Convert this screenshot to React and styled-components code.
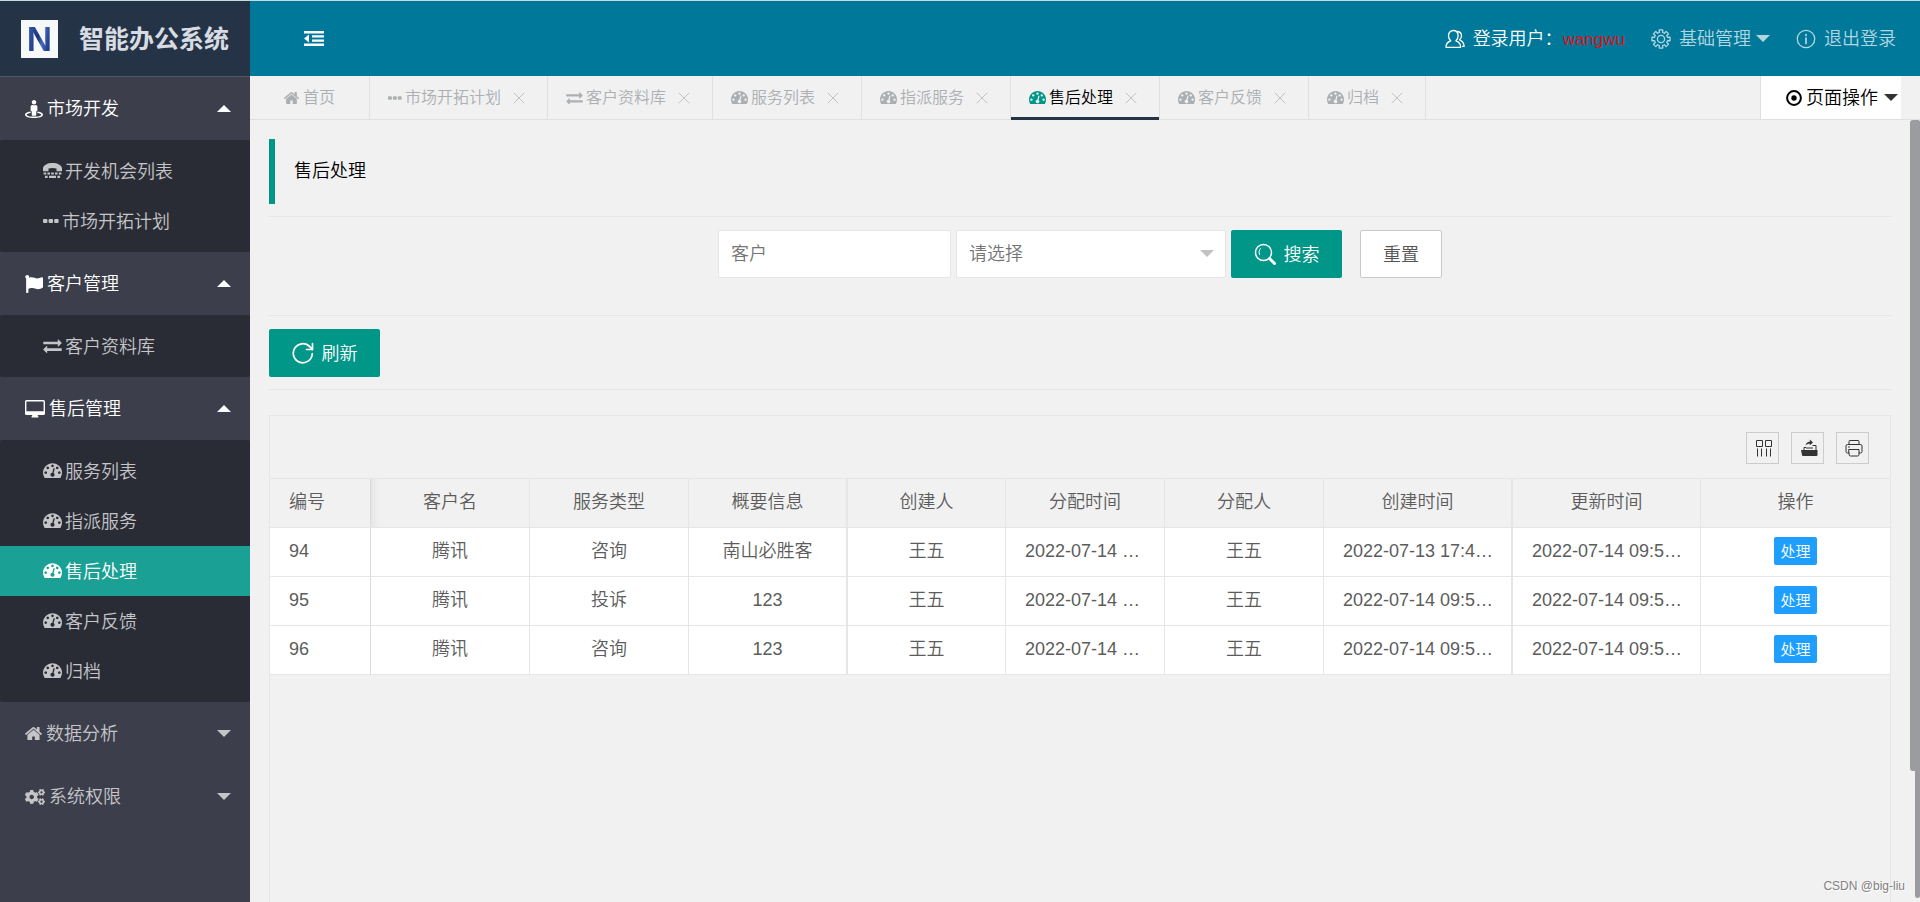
import React, {useState} from 'react';
import styled, {createGlobalStyle, css} from 'styled-components';
import {FaCogs, FaFlag, FaStreetView} from 'react-icons/fa';

const GlobalStyle = createGlobalStyle`
  * {
    box-sizing: border-box;
  }
  body {
    margin: 0;
    background-color: #f1f1f1;
    font-family: "Liberation Sans", "Noto Sans CJK SC", sans-serif;
    font-size: 18px;
    font-weight: 350;
    color: #5c5c5c;
  }
  button, input, select {
    font-family: inherit;
    font-size: inherit;
    font-weight: inherit;
  }
  a {
    color: inherit;
    text-decoration: none;
  }
  ul {
    list-style: none;
    margin: 0;
    padding: 0;
  }
`;

// ---------- icons ----------

const Svg = styled.svg`
  display: block;
  flex: none;
  fill: currentColor;
`;

const LineSvg = styled(Svg)`
  fill: none;
  stroke: currentColor;
  stroke-linecap: round;
  stroke-linejoin: round;
`;

const HomeIcon = ({size}) => (
    <Svg viewBox="90 250 1612 1290" width={size} height={size * 0.8}>
        <path d="M1472 992v480q0 26-19 45t-45 19h-384v-384h-256v384h-384q-26 0-45-19t-19-45v-480q0-1 .5-3t.5-3l575-474 575 474q1 2 1 6zm223-69l-62 74q-8 9-21 11h-3q-13 0-21-7l-692-577-692 577q-12 8-24 7-13-2-21-11l-62-74q-8-10-7-23.5t11-21.5l719-599q32-26 76-26t76 26l244 204v-195q0-14 9-23t23-9h192q14 0 23 9t9 23v408l219 182q10 8 11 21.5t-7 23.5z"/>
    </Svg>
);

const DashboardIcon = ({size}) => (
    <Svg viewBox="0 256 1792 1408" width={size} height={size * 0.8}>
        <path d="M384 1152q0-53-37.5-90.5t-90.5-37.5-90.5 37.5-37.5 90.5 37.5 90.5 90.5 37.5 90.5-37.5 37.5-90.5zm192-448q0-53-37.5-90.5t-90.5-37.5-90.5 37.5-37.5 90.5 37.5 90.5 90.5 37.5 90.5-37.5 37.5-90.5zm428 481l101-382q6-26-7.5-48.5t-38.5-29.5-48 6.5-30 39.5l-101 382q-60 5-107 43.5t-63 98.5q-20 77 20 146t117 89 146-20 89-117q16-60-6-117t-72-91zm660-33q0-53-37.5-90.5t-90.5-37.5-90.5 37.5-37.5 90.5 37.5 90.5 90.5 37.5 90.5-37.5 37.5-90.5zm-640-640q0-53-37.5-90.5t-90.5-37.5-90.5 37.5-37.5 90.5 37.5 90.5 90.5 37.5 90.5-37.5 37.5-90.5zm448 192q0-53-37.5-90.5t-90.5-37.5-90.5 37.5-37.5 90.5 37.5 90.5 90.5 37.5 90.5-37.5 37.5-90.5zm320 448q0 261-141 483-19 29-54 29h-1402q-35 0-54-29-141-221-141-483 0-182 71-348t191-286 286-191 348-71 348 71 286 191 191 286 71 348z"/>
    </Svg>
);

const ExchangeIcon = ({size}) => (
    <Svg viewBox="0 160 1792 1472" width={size} height={size * 0.8}>
        <path d="M1792 1184v192q0 13-9.5 22.5t-22.5 9.5h-1376v192q0 13-9.5 22.5t-22.5 9.5q-12 0-24-10l-319-320q-9-9-9-22 0-14 9-23l320-320q9-9 23-9 13 0 22.5 9.5t9.5 22.5v192h1376q13 0 22.5 9.5t9.5 22.5zm0-544q0 14-9 23l-320 320q-9 9-23 9-13 0-22.5-9.5t-9.5-22.5v-192h-1376q-13 0-22.5-9.5t-9.5-22.5v-192q0-13 9.5-22.5t22.5-9.5h1376v-192q0-14 9-23t23-9q12 0 24 10l319 319q9 9 9 23z"/>
    </Svg>
);

const TtyIcon = ({size}) => (
    <Svg viewBox="0 0 19 15" width={size} height={size * 0.8}>
        <path d="M0 7.600V5.200C.5 2 4.500 0 9.500 0S18.500 2 19 5.200v2.400a.6.6 0 0 1-.6.6h-4.300a.6.6 0 0 1-.6-.6V5.400c-2.500-.8-5.500-.8-8 0v2.200a.6.6 0 0 1-.6.6H.6a.6.6 0 0 1-.6-.6z"/>
        <path d="M.6 9.300h2.600v2.200H.6zM4.400 9.300H7v2.200H4.400zM8.200 9.300h2.600v2.200H8.200zM12 9.300h2.600v2.200H12zM15.800 9.300h2.600v2.200h-2.600zM2 12.700h2.600v2.200H2zM6 12.700h7v2.200H6zM14.400 12.700H17v2.200h-2.600z"/>
    </Svg>
);

const EllipsisIcon = ({size}) => (
    <Svg viewBox="0 0 16 16" width={size} height={size}>
        <rect x="0" y="6" width="4.4" height="4" rx="1"/>
        <rect x="5.6" y="6" width="4.4" height="4" rx="1"/>
        <rect x="11.2" y="6" width="4.4" height="4" rx="1"/>
    </Svg>
);

const DesktopIcon = ({size}) => (
    <Svg viewBox="0 0 20 18" width={size} height={size * 0.9}>
        <path fillRule="evenodd" d="M1.6 0h16.8a1.6 1.6 0 0 1 1.6 1.6v11.8a1.6 1.6 0 0 1-1.6 1.6H12.600c.1 1 .9 1.200.9 1.900a.6.6 0 0 1-.6.6H7.100a.6.6 0 0 1-.6-.6c0-.7.8-.9.9-1.900H1.600A1.600 1.600 0 0 1 0 13.400V1.600A1.600 1.600 0 0 1 1.600 0zM1.700 1.400a.3.3 0 0 0-.3.3v9.300c0 .2.100.3.3.3h16.600c.2 0 .3-.1.3-.3V1.700c0-.2-.1-.3-.3-.3z"/>
    </Svg>
);

const OutdentIcon = () => (
    <Svg viewBox="0 0 20 15" width="20" height="15">
        <path d="M0 0h20v2.500H0zM8 4.200h12v2.400H8zM8 8.400h12v2.400H8zM0 12.500h20V15H0zM0 7.500l5-4v8z"/>
    </Svg>
);

const UserIcon = () => (
    <LineSvg viewBox="0 0 20 20" width="20" height="20" strokeWidth="1.300">
        <path d="M1 18.300c0-3.600 1.900-5.600 4.700-6.500C4.300 10.600 3.500 8.800 3.500 6.700 3.500 3.600 5.500 1.500 8.300 1.500s4.800 2.100 4.800 5.200c0 2.100-.8 3.900-2.200 5.100 2.800.9 4.700 2.900 4.700 6.500z"/>
        <path d="M12.600 2.500c2.400.3 3.900 1.900 3.900 4.200 0 1.700-.7 3.200-1.900 4.100 2.600 1.100 4.400 3.300 4.500 6.600h-1.500"/>
    </LineSvg>
);

const gearPath = () => {
    const points = [];
    for (let i = 0; i < 8; i++) {
        const a = (i * Math.PI) / 4 - Math.PI / 2;
        [[-0.25, 6.7], [-0.19, 9.2], [0.19, 9.2], [0.25, 6.7]].forEach(([d, r]) => {
            points.push(`${(10 + r * Math.cos(a + d)).toFixed(2)} ${(10 + r * Math.sin(a + d)).toFixed(2)}`);
        });
    }
    return `M${points.join('L')}z`;
};

const GearIcon = () => (
    <LineSvg viewBox="0 0 20 20" width="20" height="20" strokeWidth="1.300">
        <path d={gearPath()}/>
        <circle cx="10" cy="10" r="3.600"/>
    </LineSvg>
);

const InfoIcon = () => (
    <LineSvg viewBox="0 0 20 20" width="20" height="20" strokeWidth="1.300">
        <circle cx="10" cy="10" r="8.700"/>
        <path d="M10 9v5.500M10 5.500v1" strokeWidth="1.700"/>
    </LineSvg>
);

const DotCircleIcon = () => (
    <Svg viewBox="0 0 16 16" width="16" height="16">
        <circle cx="8" cy="8" r="6.900" fill="none" stroke="currentColor" strokeWidth="2"/>
        <circle cx="8" cy="8" r="2.700"/>
    </Svg>
);

const CloseIcon = () => (
    <LineSvg viewBox="0 0 12 12" width="12" height="12">
        <path d="M1 1l10 10M11 1L1 11"/>
    </LineSvg>
);

const SearchIcon = () => (
    <LineSvg viewBox="0 0 22 22" width="22" height="22" strokeWidth="1.500">
        <circle cx="9.500" cy="9.500" r="8"/>
        <path d="M5.500 11.500c-.9-2-.5-4.500 1-6" strokeWidth="1"/>
        <path d="M15.500 15.500l5 5" strokeWidth="3"/>
    </LineSvg>
);

const RefreshIcon = () => (
    <LineSvg viewBox="0 0 22 22" width="22" height="22" strokeWidth="1.700">
        <path d="M20.300 11.500A9.500 9.500 0 1 1 17.700 4.700l2.500 2.600"/>
        <path d="M20.500 1.500v6h-6"/>
    </LineSvg>
);

const ColumnsIcon = () => (
    <LineSvg viewBox="0 0 18 18" width="18" height="18">
        <path d="M1.500 1.500h6v6h-6zM10.500 1.500h6v6h-6zM2.500 9.500v8M6.500 9.500v8M11.500 9.500v8M15.500 9.500v8" strokeLinecap="butt"/>
    </LineSvg>
);

const ExportIcon = () => (
    <Svg viewBox="0 0 18 18" width="18" height="18">
        <path d="M1 11h16.500v5a1 1 0 0 1-1 1H3a1 1 0 0 1-1-1z"/>
        <path d="M4 11V8.500h2M12.500 6.500H16V11" fill="none" stroke="currentColor"/>
        <path d="M5.500 6.500C6 4 7.500 2.800 9.800 2.700V.5L13 3.500 9.800 6.200V4.700C8 4.700 6.600 5.200 5.500 6.500z"/>
        <path d="M6 9h7" stroke="currentColor"/>
    </Svg>
);

const PrintIcon = () => (
    <LineSvg viewBox="0 0 18 18" width="18" height="18">
        <path d="M4 5.500V2.500a1 1 0 0 1 1-1h8a1 1 0 0 1 1 1v3M4 14H2.500a1.500 1.500 0 0 1-1.500-1.500V7a1.500 1.500 0 0 1 1.500-1.500h13A1.500 1.500 0 0 1 17 7v5.500a1.500 1.500 0 0 1-1.500 1.500H14M3.500 8h1"/>
        <path d="M4 10.500h10v5a1.500 1.500 0 0 1-1.500 1.500h-7A1.500 1.500 0 0 1 4 15.500z"/>
    </LineSvg>
);

const Caret = styled.span`
  flex: none;
  width: 0;
  height: 0;
  border: 7px solid transparent;
  ${(props) => props.$up
    ? css`border-top-width: 0; border-bottom-color: currentColor;`
    : css`border-bottom-width: 0; border-top-color: currentColor;`}
`;

// text that stands beside an icon, lifted to the icon's optical middle
const Label = styled.span`
  padding-bottom: 3px;
`;

// ---------- data ----------

const menus = [
    {
        title: '市场开发', icon: <FaStreetView size={18}/>, open: true,
        items: [
            {title: '开发机会列表', icon: <TtyIcon size={19}/>},
            {title: '市场开拓计划', icon: <EllipsisIcon size={16}/>},
        ],
    },
    {
        title: '客户管理', icon: <FaFlag size={18}/>, open: true,
        items: [{title: '客户资料库', icon: <ExchangeIcon size={19}/>}],
    },
    {
        title: '售后管理', icon: <DesktopIcon size={20}/>, open: true,
        items: ['服务列表', '指派服务', '售后处理', '客户反馈', '归档'].map((title) => (
            {title, icon: <DashboardIcon size={19}/>}
        )),
    },
    {title: '数据分析', icon: <HomeIcon size={17}/>, open: false, items: []},
    {title: '系统权限', icon: <FaCogs size={20}/>, open: false, items: []},
];

const tabs = [
    {title: '市场开拓计划', icon: <EllipsisIcon size={14}/>},
    {title: '客户资料库', icon: <ExchangeIcon size={17}/>},
    {title: '服务列表', icon: <DashboardIcon size={17}/>},
    {title: '指派服务', icon: <DashboardIcon size={17}/>},
    {title: '售后处理', icon: <DashboardIcon size={17}/>},
    {title: '客户反馈', icon: <DashboardIcon size={17}/>},
    {title: '归档', icon: <DashboardIcon size={17}/>},
];

const columns = [
    {key: 'id', title: '编号', width: 101, align: 'left', fixed: true},
    {key: 'customer', title: '客户名', width: 159},
    {key: 'type', title: '服务类型', width: 159},
    {key: 'overview', title: '概要信息', width: 159, thick: true},
    {key: 'creator', title: '创建人', width: 158},
    {key: 'assignTime', title: '分配时间', width: 159, time: true},
    {key: 'assigner', title: '分配人', width: 159},
    {key: 'createTime', title: '创建时间', width: 189, time: true, thick: true},
    {key: 'updateTime', title: '更新时间', width: 188, time: true},
];

const rows = [
    {id: '94', customer: '腾讯', type: '咨询', overview: '南山必胜客', creator: '王五', assignTime: '2022-07-14 …', assigner: '王五', createTime: '2022-07-13 17:4…', updateTime: '2022-07-14 09:5…'},
    {id: '95', customer: '腾讯', type: '投诉', overview: '123', creator: '王五', assignTime: '2022-07-14 …', assigner: '王五', createTime: '2022-07-14 09:5…', updateTime: '2022-07-14 09:5…'},
    {id: '96', customer: '腾讯', type: '咨询', overview: '123', creator: '王五', assignTime: '2022-07-14 …', assigner: '王五', createTime: '2022-07-14 09:5…', updateTime: '2022-07-14 09:5…'},
];

// ---------- layout ----------

const Layout = styled.div`
  display: flex;
  height: 100vh;
  overflow: hidden;
  border-top: 1px solid #c5dbe0;
`;

const Side = styled.aside`
  flex: none;
  width: 250px;
  background-color: #3c3f4b;
  overflow: hidden;
`;

const Logo = styled.a`
  display: flex;
  align-items: center;
  gap: 21px;
  height: 76px;
  padding-left: 21px;
  background-color: #243346;
  border-bottom: 1px solid #4d5665;
`;

const LogoMark = styled.span`
  display: flex;
  align-items: center;
  justify-content: center;
  width: 37px;
  height: 38px;
  background: #f7f8fa;
`;

const LogoLetter = styled.span`
  font-size: 35px;
  line-height: 38px;
  font-weight: 700;
  color: transparent;
  background: linear-gradient(100deg, #2f4f9f 20%, #1b3379 45%, #4a6cbc 60%, #23418f 80%);
  background-clip: text;
`;

const LogoText = styled.h1`
  margin: 0;
  font-size: 25px;
  line-height: 36px;
  font-weight: 700;
  color: #d8dce2;
`;

const MenuHead = styled.button`
  display: flex;
  align-items: center;
  gap: 4px;
  width: 100%;
  height: 63px;
  padding: 0 19px 0 25px;
  border: 0;
  background: none;
  color: ${(props) => props.$open ? '#fff' : '#c5c5c9'};
  cursor: pointer;

  ${Caret} {
    margin-left: auto;
  }
`;

const SubMenu = styled.ul`
  padding: 6px 0;
  background-color: #2a2c35;
  border-radius: 2px;
`;

const SubLink = styled.a`
  display: flex;
  align-items: center;
  gap: 3px;
  height: 50px;
  padding-left: 43px;
  color: ${(props) => props.$active ? '#fff' : '#c4c5c8'};
  background-color: ${(props) => props.$active && '#1aa094'};
`;

const Main = styled.div`
  flex: 1;
  min-width: 0;
  display: flex;
  flex-direction: column;
`;

const Header = styled.header`
  flex: none;
  display: flex;
  align-items: center;
  justify-content: space-between;
  height: 75px;
  padding: 0 24px 0 54px;
  background-color: #00789a;
  color: #fff;
`;

const IconButton = styled.button`
  display: flex;
  padding: 0;
  border: 0;
  background: none;
  color: inherit;
  cursor: pointer;
`;

const HeaderNav = styled.nav`
  display: flex;
  align-items: center;
  gap: 26px;
`;

const HeaderLink = styled.a`
  display: flex;
  align-items: center;
  gap: 8px;
  color: ${(props) => props.$bright ? '#fff' : '#b3d7e1'};

  ${Caret} {
    margin-left: -3px;
  }
`;

const UserName = styled.span`
  font-size: 17px;
  color: #d8141c;
`;

const TabBar = styled.div`
  flex: none;
  display: flex;
  height: 44px;
  padding-right: 19px;
  border-bottom: 1px solid #e0e0e0;
`;

const Tab = styled.div`
  position: relative;
  display: flex;
  align-items: center;
  padding: ${(props) => props.$home ? '0 34px' : '0 18px'};
  border-right: 1px solid #e0e0e0;
  font-size: 16px;
  color: ${(props) => props.$active ? '#000' : '#acafb1'};

  svg {
    color: ${(props) => props.$active && '#009688'};
  }

  ${(props) => props.$active && css`
    &::after {
      content: '';
      position: absolute;
      left: 0;
      right: 0;
      bottom: -1px;
      height: 3px;
      background-color: #243346;
    }
  `}
`;

const TabLink = styled.a`
  display: flex;
  align-items: center;
  gap: ${(props) => props.$home ? '4px' : '3px'};
`;

const TabClose = styled.button`
  display: flex;
  align-items: center;
  justify-content: center;
  width: 20px;
  height: 20px;
  margin-left: 8px;
  padding: 0;
  border: 0;
  background: none;
  cursor: pointer;

  svg {
    color: #c2c2c2;
  }
`;

const PageActions = styled.button`
  display: flex;
  align-items: center;
  gap: 4px;
  margin-left: auto;
  padding: 0 3px 0 25px;
  border: 0;
  border-left: 1px solid #e0e0e0;
  background-color: #fff;
  color: #000;
  cursor: pointer;

  ${Caret} {
    margin-left: 2px;
    color: #333;
  }
`;

const Content = styled.main`
  position: relative;
  flex: 1;
  min-height: 0;
  display: flex;
  flex-direction: column;
  padding: 19px 29px 0 19px;
`;

const PageTitle = styled.h2`
  margin: 0;
  padding-left: 19px;
  border-left: 6px solid #009688;
  font-size: 18px;
  line-height: 65px;
  font-weight: 350;
  color: #000;
`;

const Divider = styled.hr`
  width: 100%;
  height: 1px;
  margin: 12px 0 13px;
  border: 0;
  background-color: #e6e6e6;
`;

const SearchForm = styled.form`
  display: flex;
  justify-content: center;
  gap: 5px;
  padding-bottom: 25px;
`;

const field = css`
  height: 48px;
  border: 1px solid #e6e6e6;
  border-radius: 2px;
  background-color: #fff;
  color: #757575;
  outline: none;
`;

const TextField = styled.input`
  ${field}
  width: 233px;
  padding: 0 12px;

  &::placeholder {
    color: #757575;
  }
`;

const SelectBox = styled.div`
  position: relative;
  width: 270px;

  ${Caret} {
    position: absolute;
    right: 12px;
    top: 20px;
    color: #c2c2c2;
    pointer-events: none;
  }
`;

const Select = styled.select`
  ${field}
  width: 100%;
  padding: 0 12px;
  appearance: none;
`;

const Button = styled.button`
  display: flex;
  align-items: center;
  justify-content: center;
  gap: 8px;
  width: ${(props) => props.$plain ? '82px' : '111px'};
  height: 48px;
  padding: 0;
  border: ${(props) => props.$plain ? '1px solid #c9c9c9' : '0'};
  border-radius: 2px;
  background-color: ${(props) => props.$plain ? '#fff' : '#009688'};
  color: ${(props) => props.$plain ? '#555' : '#fff'};
  margin-left: ${(props) => props.$plain && '13px'};
  cursor: pointer;
`;

const TableView = styled.section`
  flex: 1;
  margin-top: 12px;
  border: 1px solid #e6e6e6;
  border-bottom: 0;
`;

const TableTools = styled.div`
  display: flex;
  justify-content: flex-end;
  gap: 12px;
  height: 63px;
  padding: 16px 21px 0 0;
  border-bottom: 1px solid #e6e6e6;
`;

const ToolButton = styled.button`
  display: flex;
  align-items: center;
  justify-content: center;
  width: 33px;
  height: 32px;
  padding: 0 0 0 2px;
  border: 1px solid #ccc;
  background: none;
  color: #333;
  cursor: pointer;
`;

const Table = styled.table`
  width: 100%;
  table-layout: fixed;
  border-collapse: separate;
  border-spacing: 0;
`;

const cell = css`
  position: relative;
  height: 49px;
  padding: 0 19px 2px;
  border: 0 solid #e6e6e6;
  border-bottom-width: 1px;
  border-right-width: ${(props) => props.$thick ? '2px' : '1px'};
  text-align: ${(props) => props.$align || 'center'};
  font-weight: 350;
  line-height: 28px;
  white-space: nowrap;

  &:last-child {
    border-right-width: 0;
  }

  ${(props) => props.$fixed && css`
    &::after {
      content: '';
      position: absolute;
      top: 0;
      bottom: 0;
      left: 100%;
      width: 10px;
      background: linear-gradient(to right, rgba(0, 0, 0, 0.05), transparent);
    }
  `}
`;

const Th = styled.th`
  ${cell}
`;

const Td = styled.td`
  ${cell}
  background-color: #fff;
`;

const RowButton = styled.button`
  display: block;
  width: 43px;
  height: 28px;
  margin: 0 auto;
  padding: 0 0 2px;
  border: 0;
  border-radius: 2px;
  background-color: #1e9fff;
  color: #fff;
  font-size: 15px;
  cursor: pointer;
`;

const ScrollThumb = styled.div`
  position: absolute;
  top: 0;
  right: 0;
  width: ${(props) => props.$outer ? '5px' : '10px'};
  bottom: ${(props) => props.$outer ? '4px' : '131px'};
  border-radius: 3px;
  background-color: #9b9ca0;
`;

const Watermark = styled.span`
  position: absolute;
  right: 15px;
  bottom: 8px;
  font-size: 12px;
  line-height: 16px;
  color: #808080;
  text-shadow: 1px 1px 0 #fff;
`;

const SideMenu = () => {
    const [opened, setOpened] = useState(menus.map((menu) => menu.open));
    const toggle = (index) => setOpened(opened.map((open, i) => i === index ? !open : open));
    return (
        <nav>
            {menus.map((menu, index) => (
                <div key={menu.title}>
                    <MenuHead type="button" $open={opened[index]} onClick={() => toggle(index)}>
                        {menu.icon}
                        <Label>{menu.title}</Label>
                        <Caret $up={opened[index]}/>
                    </MenuHead>
                    {opened[index] && menu.items.length > 0 && (
                        <SubMenu>
                            {menu.items.map((item) => (
                                <li key={item.title}>
                                    <SubLink href="#" $active={item.title === '售后处理'}>
                                        {item.icon}
                                        <Label>{item.title}</Label>
                                    </SubLink>
                                </li>
                            ))}
                        </SubMenu>
                    )}
                </div>
            ))}
        </nav>
    );
};

const ServiceTable = () => (
    <Table>
        <colgroup>
            {columns.map((col) => <col key={col.key} width={col.width}/>)}
            <col width="189"/>
        </colgroup>
        <thead>
            <tr>
                {columns.map((col) => (
                    <Th key={col.key} $align={col.align} $fixed={col.fixed} $thick={col.thick}>{col.title}</Th>
                ))}
                <Th>操作</Th>
            </tr>
        </thead>
        <tbody>
            {rows.map((row) => (
                <tr key={row.id}>
                    {columns.map((col) => (
                        <Td
                            key={col.key}
                            $align={col.time ? 'left' : col.align}
                            $fixed={col.fixed}
                            $thick={col.thick}
                        >
                            {row[col.key]}
                        </Td>
                    ))}
                    <Td><RowButton type="button">处理</RowButton></Td>
                </tr>
            ))}
        </tbody>
    </Table>
);

const App = () => {
    return (
        <>
            <GlobalStyle/>
            <Layout>
                <Side>
                    <Logo href="#">
                        <LogoMark><LogoLetter>N</LogoLetter></LogoMark>
                        <LogoText>智能办公系统</LogoText>
                    </Logo>
                    <SideMenu/>
                </Side>
                <Main>
                    <Header>
                        <IconButton type="button" aria-label="收起菜单"><OutdentIcon/></IconButton>
                        <HeaderNav>
                            <HeaderLink href="#" $bright>
                                <UserIcon/>
                                <Label>登录用户：<UserName>wangwu</UserName></Label>
                            </HeaderLink>
                            <HeaderLink href="#"><GearIcon/><Label>基础管理</Label><Caret/></HeaderLink>
                            <HeaderLink href="#"><InfoIcon/><Label>退出登录</Label></HeaderLink>
                        </HeaderNav>
                    </Header>
                    <TabBar>
                        <Tab $home>
                            <TabLink href="#" $home><HomeIcon size={15}/><Label>首页</Label></TabLink>
                        </Tab>
                        {tabs.map((tab) => (
                            <Tab key={tab.title} $active={tab.title === '售后处理'}>
                                <TabLink href="#">{tab.icon}<Label>{tab.title}</Label></TabLink>
                                <TabClose type="button" aria-label="关闭"><CloseIcon/></TabClose>
                            </Tab>
                        ))}
                        <PageActions type="button"><DotCircleIcon/><Label>页面操作</Label><Caret/></PageActions>
                    </TabBar>
                    <Content>
                        <PageTitle>售后处理</PageTitle>
                        <Divider/>
                        <SearchForm onSubmit={(e) => e.preventDefault()}>
                            <TextField type="text" placeholder="客户" aria-label="客户"/>
                            <SelectBox>
                                <Select aria-label="请选择">
                                    <option>请选择</option>
                                </Select>
                                <Caret/>
                            </SelectBox>
                            <Button type="submit"><SearchIcon/><Label>搜索</Label></Button>
                            <Button type="reset" $plain><Label>重置</Label></Button>
                        </SearchForm>
                        <Divider/>
                        <Button type="button"><RefreshIcon/><Label>刷新</Label></Button>
                        <Divider/>
                        <TableView>
                            <TableTools>
                                <ToolButton type="button" aria-label="筛选列"><ColumnsIcon/></ToolButton>
                                <ToolButton type="button" aria-label="导出"><ExportIcon/></ToolButton>
                                <ToolButton type="button" aria-label="打印"><PrintIcon/></ToolButton>
                            </TableTools>
                            <ServiceTable/>
                        </TableView>
                        <ScrollThumb/>
                        <ScrollThumb $outer/>
                        <Watermark>CSDN @big-liu</Watermark>
                    </Content>
                </Main>
            </Layout>
        </>
    );
};

export default App;
